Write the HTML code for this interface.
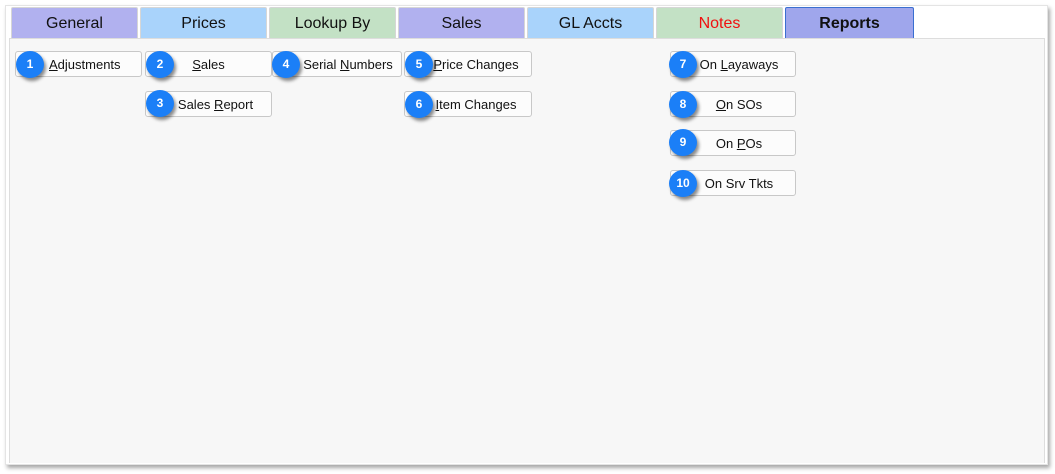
<!DOCTYPE html>
<html><head><style>
body{margin:0;width:1055px;height:474px;background:#fff;position:relative;overflow:hidden;font-family:"Liberation Sans",Arial,sans-serif}
.frame{position:absolute;left:5px;top:5px;width:1041px;height:458px;background:#fff;box-shadow:2px 3px 4px rgba(0,0,0,.35);border:1px solid #e4e4e4}
.panel{position:absolute;left:9px;top:38px;width:1034px;height:424px;background:#f7f7f7;border-left:1px solid #ddd;border-top:1px solid #ddd;border-right:1px solid #ddd}
.tab{position:absolute;top:7px;height:31px;width:127px;text-align:center;line-height:31px;font-size:16px;color:#111;box-sizing:border-box;border:1px solid #d6d6d6;border-bottom:none;border-radius:2px 2px 0 0}
.btn{position:absolute;height:26px;width:127px;box-sizing:border-box;background:#fcfcfc;border:1px solid #c8c8c8;border-radius:3px;font-size:13px;line-height:26px;text-align:center;color:#111}
.b{position:absolute;width:28px;height:27px;border-radius:50%;background:#1b7ff7;color:#fff;font-weight:bold;font-size:12px;line-height:27px;text-align:center;box-shadow:2px 3px 3px rgba(0,0,0,.45)}
u{text-decoration:underline}
</style></head><body>
<div class="frame"></div>
<div class="panel"></div>
<div class="tab" style="left:11px;background:#b1b1ef">General</div>
<div class="tab" style="left:140px;background:#a9d3fb">Prices</div>
<div class="tab" style="left:269px;background:#c3e1c5">Lookup By</div>
<div class="tab" style="left:398px;background:#b1b1ef">Sales</div>
<div class="tab" style="left:527px;background:#a9d3fb">GL Accts</div>
<div class="tab" style="left:656px;background:#c3e1c5;color:#f01010">Notes</div>
<div class="tab" style="left:785px;width:129px;background:#9fa6ec;border:1px solid #3b6fd0;border-bottom:none;font-weight:bold">Reports</div>

<div class="btn" style="left:15px;top:51px;text-align:left;padding-left:33px"><u>A</u>djustments</div>
<div class="btn" style="left:145px;top:51px"><u>S</u>ales</div>
<div class="btn" style="left:272px;top:51px;width:130px;padding-left:22px">Serial <u>N</u>umbers</div>
<div class="btn" style="left:404px;top:51px;width:128px;padding-left:16px"><u>P</u>rice Changes</div>
<div class="btn" style="left:145px;top:91px;padding-left:14px">Sales <u>R</u>eport</div>
<div class="btn" style="left:404px;top:91px;width:128px;padding-left:16px"><u>I</u>tem Changes</div>
<div class="btn" style="left:670px;top:51px;width:126px;padding-left:12px">On <u>L</u>ayaways</div>
<div class="btn" style="left:670px;top:91px;width:126px;padding-left:12px"><u>O</u>n SOs</div>
<div class="btn" style="left:670px;top:130px;width:126px;padding-left:12px">On <u>P</u>Os</div>
<div class="btn" style="left:670px;top:170px;width:126px;padding-left:12px">On Srv Tkts</div>

<div class="b" style="left:16px;top:51px">1</div>
<div class="b" style="left:146px;top:51px">2</div>
<div class="b" style="left:272px;top:51px">4</div>
<div class="b" style="left:405px;top:51px">5</div>
<div class="b" style="left:146px;top:90px">3</div>
<div class="b" style="left:405px;top:91px">6</div>
<div class="b" style="left:669px;top:51px">7</div>
<div class="b" style="left:669px;top:91px">8</div>
<div class="b" style="left:669px;top:129px">9</div>
<div class="b" style="left:669px;top:170px">10</div>
</body></html>
